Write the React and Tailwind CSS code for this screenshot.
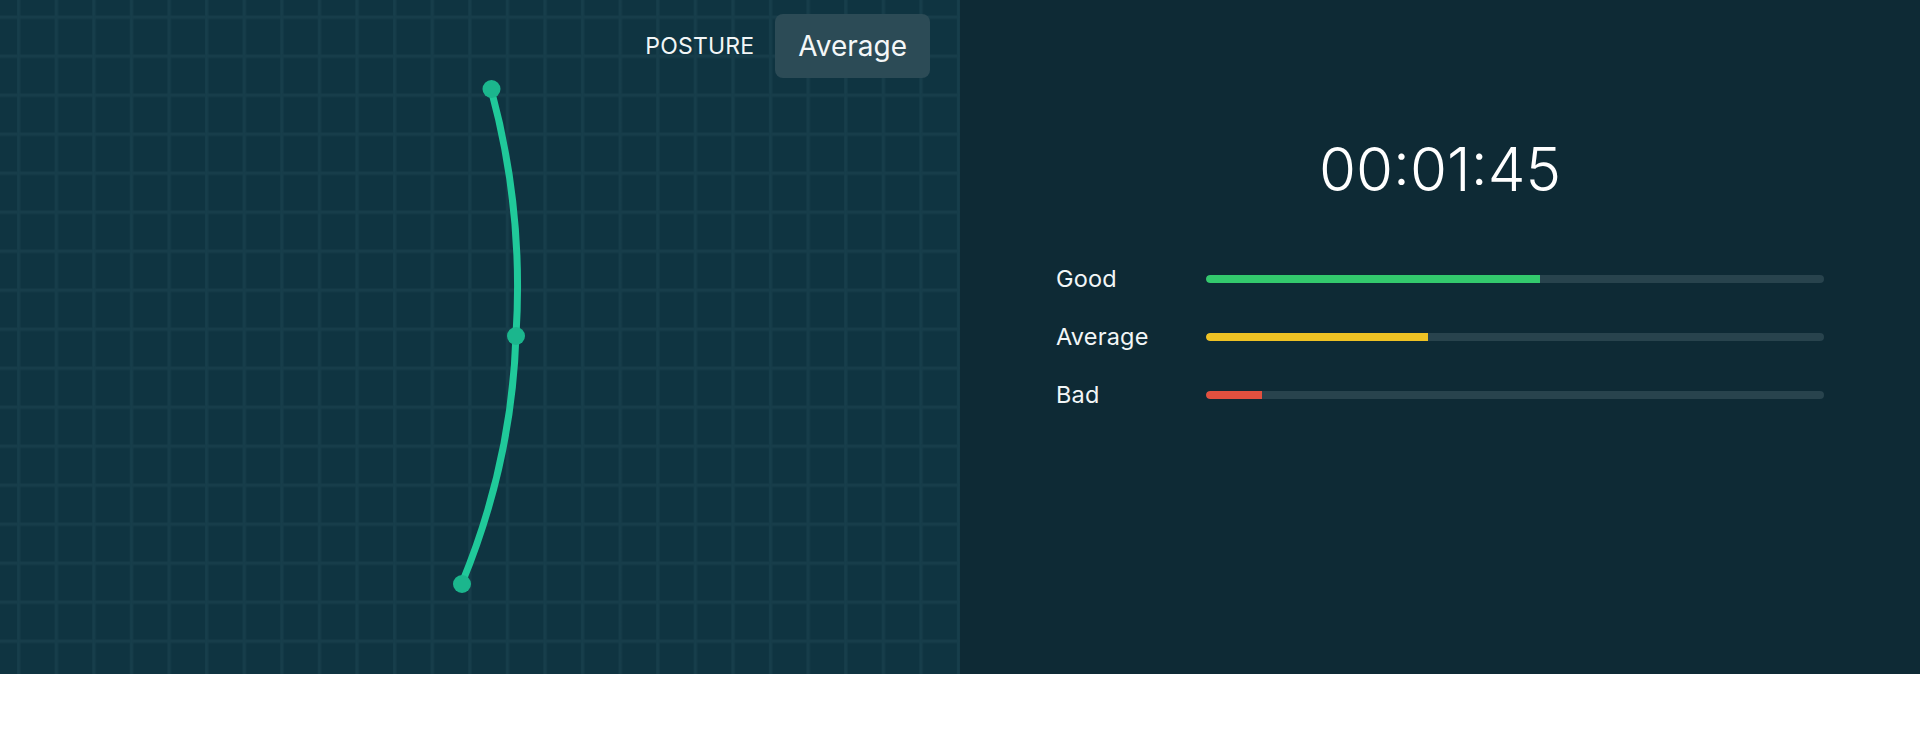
import React from "react";

const rows = [
  { label: "Good", pct: 54, color: "bg-[#33c96d]" },
  { label: "Average", pct: 36, color: "bg-[#eec224]" },
  { label: "Bad", pct: 9, color: "bg-[#e2503f]" },
];

function Spine() {
  return (
    <svg
      className="absolute inset-0 h-full w-full"
      viewBox="0 0 960 674"
      preserveAspectRatio="none"
    >
      <path
        d="M491 89 Q524 210 516 335 Q512 462 462 583"
        fill="none"
        stroke="#20c99a"
        strokeWidth="7"
        strokeLinecap="round"
      />
      <circle cx="491.5" cy="89" r="9" fill="#1bb68d" />
      <circle cx="516" cy="336" r="9" fill="#1bb68d" />
      <circle cx="462" cy="584" r="9" fill="#1bb68d" />
    </svg>
  );
}

export default function App() {
  return (
    <div className="flex h-[674px] w-full font-['Inter',sans-serif]">
      <div className="relative h-full w-[960px] shrink-0 bg-[#0f3441] [background-image:linear-gradient(to_right,#163c49_0px,#173e4b_1.5px,#163c49_3px,transparent_4px),linear-gradient(to_bottom,#163c49_0px,#173e4b_1.5px,#163c49_3px,transparent_4px)] [background-size:37.6px_39px] [background-position:17px_15.5px]">
        <Spine />
        <div className="relative flex justify-end pt-[14px] pr-[30px]">
          <div className="flex items-center gap-[21px]">
            <span className="text-[23px] leading-none tracking-[0.2px] text-[#f2f6f7]">POSTURE</span>
            <div className="flex h-[64px] items-center rounded-[8px] bg-[#2c4b56] px-[23px] text-[28px] leading-none text-[#f4f7f8]">
              Average
            </div>
          </div>
        </div>
      </div>
      <div className="flex h-full flex-1 flex-col bg-[#0e2a35] px-[96px] pt-[139px]">
        <div className="text-center text-[60px] font-light leading-none text-white">
          00:01:45
        </div>
        <div className="mt-[51px] flex flex-col">
          {rows.map((r) => (
            <div key={r.label} className="flex h-[58px] items-center">
              <div className="w-[150px] shrink-0 text-[23.5px] leading-none tracking-[0.2px] text-[#f2f6f7]">
                {r.label}
              </div>
              <div className="h-[8px] flex-1 overflow-hidden rounded-full bg-[#28434d]">
                <div
                  className={`h-full rounded-l-full ${r.color}`}
                  style={{ width: `${r.pct}%` }}
                />
              </div>
            </div>
          ))}
        </div>
      </div>
    </div>
  );
}
